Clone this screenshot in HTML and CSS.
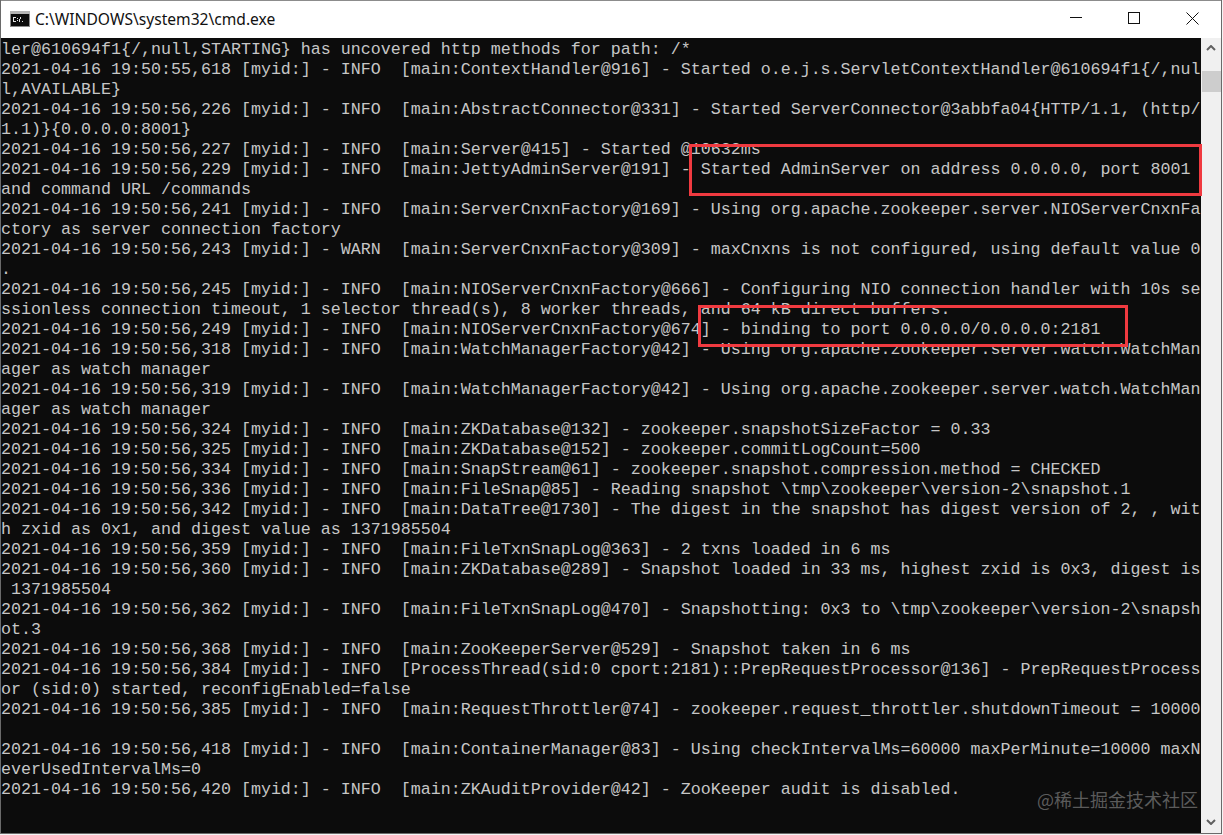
FILE: index.html
```html
<!DOCTYPE html>
<html lang="en">
<head>
<meta charset="utf-8">
<title>cmd.exe</title>
<link rel="stylesheet" href="styles.css">
</head>
<body>
<div class="window">
  <header class="titlebar">
    <svg class="app-icon" width="20" height="16" viewBox="0 0 20 16"><rect width="20" height="16" fill="#8a8a8a"/><rect y="0" width="20" height="3" fill="#b5b5b5"/><rect x="1" y="3" width="18" height="12" fill="#0c0c0c"/><path d="M3 6h3v1H3zM3 7h1v3H3zM3 10h3v1H3zM7 7h1v1H7zM7 9h1v1H7zM10 6h1v2h-1zM12 10h1v1h-1zM9 8h1v3H9z" fill="#e6e6e6"/></svg>
    <span class="title">C:\WINDOWS\system32\cmd.exe</span>
    <div class="controls">
      <span class="ctl"><svg width="12" height="12" viewBox="0 0 12 12"><path d="M0 5.5h12" stroke="#111" fill="none"/></svg></span>
      <span class="ctl"><svg width="12" height="12" viewBox="0 0 12 12"><rect x=".5" y=".5" width="11" height="11" stroke="#111" fill="none"/></svg></span>
      <span class="ctl"><svg width="13" height="13" viewBox="0 0 13 13"><path d="M.5.5l12 12M12.5.5l-12 12" stroke="#111" fill="none"/></svg></span>
    </div>
  </header>
  <div class="body">
    <pre class="console">ler@610694f1{/,null,STARTING} has uncovered http methods for path: /*
2021-04-16 19:50:55,618 [myid:] - INFO  [main:ContextHandler@916] - Started o.e.j.s.ServletContextHandler@610694f1{/,nul
l,AVAILABLE}
2021-04-16 19:50:56,226 [myid:] - INFO  [main:AbstractConnector@331] - Started ServerConnector@3abbfa04{HTTP/1.1, (http/
1.1)}{0.0.0.0:8001}
2021-04-16 19:50:56,227 [myid:] - INFO  [main:Server@415] - Started @10632ms
2021-04-16 19:50:56,229 [myid:] - INFO  [main:JettyAdminServer@191] - Started AdminServer on address 0.0.0.0, port 8001
and command URL /commands
2021-04-16 19:50:56,241 [myid:] - INFO  [main:ServerCnxnFactory@169] - Using org.apache.zookeeper.server.NIOServerCnxnFa
ctory as server connection factory
2021-04-16 19:50:56,243 [myid:] - WARN  [main:ServerCnxnFactory@309] - maxCnxns is not configured, using default value 0
.
2021-04-16 19:50:56,245 [myid:] - INFO  [main:NIOServerCnxnFactory@666] - Configuring NIO connection handler with 10s se
ssionless connection timeout, 1 selector thread(s), 8 worker threads, and 64 kB direct buffers.
2021-04-16 19:50:56,249 [myid:] - INFO  [main:NIOServerCnxnFactory@674] - binding to port 0.0.0.0/0.0.0.0:2181
2021-04-16 19:50:56,318 [myid:] - INFO  [main:WatchManagerFactory@42] - Using org.apache.zookeeper.server.watch.WatchMan
ager as watch manager
2021-04-16 19:50:56,319 [myid:] - INFO  [main:WatchManagerFactory@42] - Using org.apache.zookeeper.server.watch.WatchMan
ager as watch manager
2021-04-16 19:50:56,324 [myid:] - INFO  [main:ZKDatabase@132] - zookeeper.snapshotSizeFactor = 0.33
2021-04-16 19:50:56,325 [myid:] - INFO  [main:ZKDatabase@152] - zookeeper.commitLogCount=500
2021-04-16 19:50:56,334 [myid:] - INFO  [main:SnapStream@61] - zookeeper.snapshot.compression.method = CHECKED
2021-04-16 19:50:56,336 [myid:] - INFO  [main:FileSnap@85] - Reading snapshot \tmp\zookeeper\version-2\snapshot.1
2021-04-16 19:50:56,342 [myid:] - INFO  [main:DataTree@1730] - The digest in the snapshot has digest version of 2, , wit
h zxid as 0x1, and digest value as 1371985504
2021-04-16 19:50:56,359 [myid:] - INFO  [main:FileTxnSnapLog@363] - 2 txns loaded in 6 ms
2021-04-16 19:50:56,360 [myid:] - INFO  [main:ZKDatabase@289] - Snapshot loaded in 33 ms, highest zxid is 0x3, digest is
 1371985504
2021-04-16 19:50:56,362 [myid:] - INFO  [main:FileTxnSnapLog@470] - Snapshotting: 0x3 to \tmp\zookeeper\version-2\snapsh
ot.3
2021-04-16 19:50:56,368 [myid:] - INFO  [main:ZooKeeperServer@529] - Snapshot taken in 6 ms
2021-04-16 19:50:56,384 [myid:] - INFO  [ProcessThread(sid:0 cport:2181)::PrepRequestProcessor@136] - PrepRequestProcess
or (sid:0) started, reconfigEnabled=false
2021-04-16 19:50:56,385 [myid:] - INFO  [main:RequestThrottler@74] - zookeeper.request_throttler.shutdownTimeout = 10000

2021-04-16 19:50:56,418 [myid:] - INFO  [main:ContainerManager@83] - Using checkIntervalMs=60000 maxPerMinute=10000 maxN
everUsedIntervalMs=0
2021-04-16 19:50:56,420 [myid:] - INFO  [main:ZKAuditProvider@42] - ZooKeeper audit is disabled.</pre>
    <aside class="scrollbar">
      <svg class="arrow" width="10" height="6" viewBox="0 0 10 6"><path d="M1 5l4-4 4 4" stroke="#606060" stroke-width="2" fill="none"/></svg>
      <div class="thumb"></div>
      <svg class="arrow down" width="10" height="6" viewBox="0 0 10 6"><path d="M1 1l4 4 4-4" stroke="#606060" stroke-width="2" fill="none"/></svg>
    </aside>
    <div class="mark mark-admin"></div>
    <div class="mark mark-bind"></div>
    <div class="watermark">@稀土掘金技术社区</div>
  </div>
</div>
</body>
</html>
```
FILE: styles.css
```css
* { box-sizing: border-box; }
html, body { margin: 0; height: 100%; background: #f4f4f4; }
.window { width: 1222px; height: 834px; display: flex; flex-direction: column; overflow: hidden; background: #0c0c0c; border-left: 1px solid #6a6a6a; border-right: 1px solid #6a6a6a; border-bottom: 1px solid #6a6a6a; }
.titlebar { height: 38px; flex: none; background: #fff; border-top: 1px solid #8c8c8c; display: flex; align-items: center; padding-left: 9px; }
.app-icon { flex: none; margin-right: 5px; margin-top: -1px; }
.title { font: 15.6px/20px "Noto Sans", "Liberation Sans", sans-serif; color: #111; margin-top: -2px; }
.controls { margin-left: auto; display: flex; margin-top: -2px; align-self: flex-start; height: 38px; }
.ctl { width: 58px; display: flex; align-items: center; justify-content: center; }
.body { position: relative; flex: 1; display: flex; min-height: 0; }
.console { flex: 1; margin: 0; padding: 2px 0 0 0; background: #0c0c0c; color: #c6c6c6; font: 16.67px/20px "Liberation Mono", monospace; white-space: pre; overflow: hidden; }
.scrollbar { width: 20px; flex: none; background: #f0f0f0; display: flex; flex-direction: column; align-items: center; padding: 7px 0 8px; }
.arrow { flex: none; }
.thumb { width: 19px; height: 21px; margin-top: 20px; background: #cdcdcd; }
.down { margin-top: auto; }
.mark { position: absolute; border: 3px solid #f03a40; }
.mark-admin { left: 688px; top: 106px; width: 513px; height: 52px; }
.mark-bind { left: 697px; top: 267px; width: 430px; height: 42px; }
.watermark { position: absolute; right: 23px; top: 749px; font: 18px/24px "Noto Sans CJK SC", sans-serif; color: #5b5b5b; white-space: nowrap; }
```
